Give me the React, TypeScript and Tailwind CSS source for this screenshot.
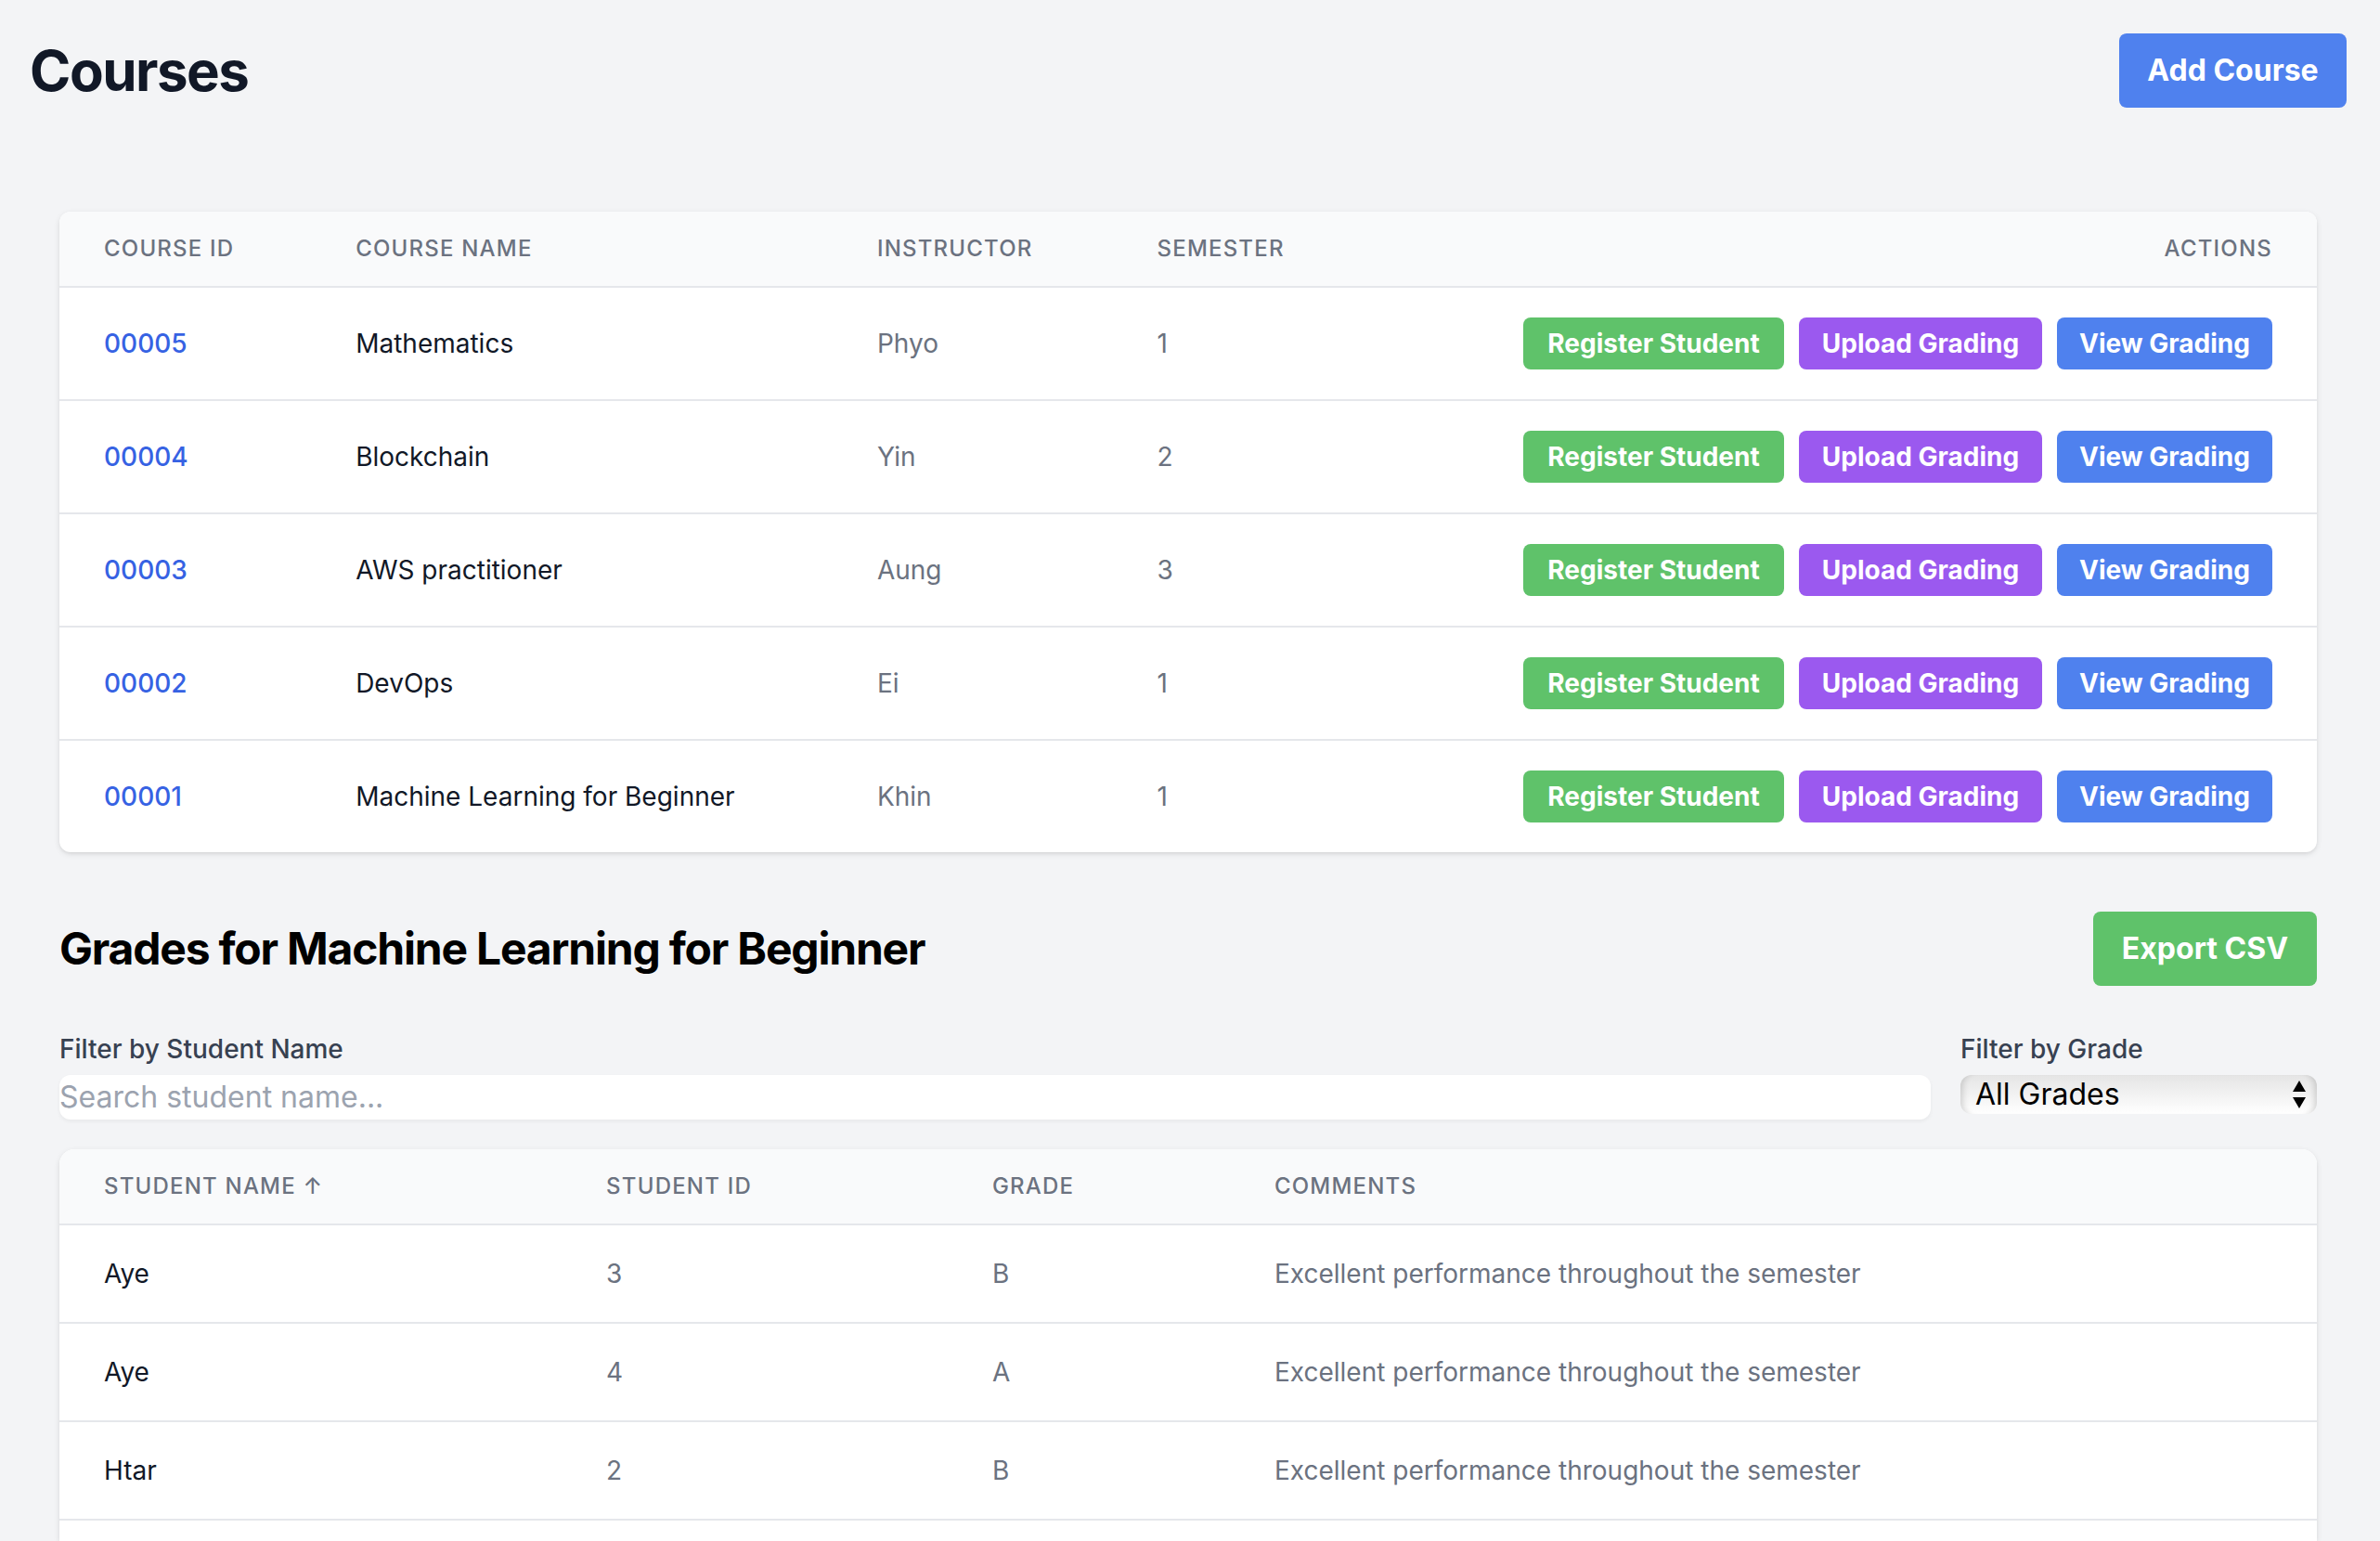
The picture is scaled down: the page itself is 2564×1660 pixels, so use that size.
import { useState } from "react";
import type { ReactNode } from "react";

const courses = [
  { id: "00005", name: "Mathematics", instructor: "Phyo", semester: 1 },
  { id: "00004", name: "Blockchain", instructor: "Yin", semester: 2 },
  { id: "00003", name: "AWS practitioner", instructor: "Aung", semester: 3 },
  { id: "00002", name: "DevOps", instructor: "Ei", semester: 1 },
  { id: "00001", name: "Machine Learning for Beginner", instructor: "Khin", semester: 1 },
];

const grades = [
  { name: "Aye", id: 3, grade: "B", comments: "Excellent performance throughout the semester" },
  { name: "Aye", id: 4, grade: "A", comments: "Excellent performance throughout the semester" },
  { name: "Htar", id: 2, grade: "B", comments: "Excellent performance throughout the semester" },
];

const cardShadow = "shadow-[0_2px_6px_rgba(0,0,0,0.1),0_2px_4px_-2px_rgba(0,0,0,0.1)]";

function Th({ children, className = "text-left" }: { children: ReactNode; className?: string }) {
  return (
    <th
      scope="col"
      className={`px-12 py-6 text-2xl leading-8 font-medium tracking-wider text-[#6b7280] uppercase ${className}`}
    >
      {children}
    </th>
  );
}

function Td({ children, className = "text-[#6b7280]" }: { children: ReactNode; className?: string }) {
  return <td className={`px-12 py-8 text-[28px] leading-10 whitespace-nowrap ${className}`}>{children}</td>;
}

function ActionButton({ children, className }: { children: ReactNode; className: string }) {
  return (
    <button type="button" className={`rounded-lg py-2 text-[28px] leading-10 font-bold text-white ${className}`}>
      {children}
    </button>
  );
}

export default function App() {
  const [query, setQuery] = useState("");
  const [grade, setGrade] = useState("");
  const visible = grades.filter(
    (g) => g.name.toLowerCase().includes(query.toLowerCase()) && (grade === "" || g.grade === grade),
  );

  return (
    <div className="flex min-h-screen flex-col bg-[#f3f4f6] font-['Inter',sans-serif] text-[32px] leading-[48px] text-black">
      <header className="flex items-center justify-between pt-9 pr-9 pl-8">
        <h1 className="text-[60px] leading-[72px] font-bold tracking-tight text-[#111827]">Courses</h1>
        <button type="button" className="w-[245px] rounded-lg bg-[#4f81ee] py-4 font-bold text-white">
          Add Course
        </button>
      </header>

      <main className="flex flex-1 flex-col pt-28 pr-[68px] pl-16">
        <section className={`overflow-hidden rounded-xl bg-white ${cardShadow}`}>
          <table className="w-full table-fixed">
            <colgroup>
              <col className="w-[11.15%]" />
              <col className="w-[23.1%]" />
              <col className="w-[12.4%]" />
              <col className="w-[13%]" />
              <col />
            </colgroup>
            <thead className="bg-[#f9fafb]">
              <tr>
                <Th>Course ID</Th>
                <Th>Course Name</Th>
                <Th>Instructor</Th>
                <Th>Semester</Th>
                <Th className="text-right">Actions</Th>
              </tr>
            </thead>
            <tbody>
              {courses.map((c) => (
                <tr key={c.id} className="border-t-2 border-[#e5e7eb]">
                  <Td className="font-medium">
                    <a href={`#${c.id}`} className="text-[#3662e3]">
                      {c.id}
                    </a>
                  </Td>
                  <Td className="text-[#111827]">{c.name}</Td>
                  <Td>{c.instructor}</Td>
                  <Td>{c.semester}</Td>
                  <Td>
                    <div className="flex justify-end gap-4">
                      <ActionButton className="w-[281px] bg-[#5fc26a]">Register Student</ActionButton>
                      <ActionButton className="w-[262px] bg-[#9b59ef]">Upload Grading</ActionButton>
                      <ActionButton className="w-[232px] bg-[#4f81ee]">View Grading</ActionButton>
                    </div>
                  </Td>
                </tr>
              ))}
            </tbody>
          </table>
        </section>

        <div className="flex items-center justify-between pt-16">
          <h2 className="text-5xl leading-[64px] font-bold tracking-tight">Grades for Machine Learning for Beginner</h2>
          <button type="button" className="w-[241px] rounded-lg bg-[#5fc26a] py-4 font-bold text-white">
            Export CSV
          </button>
        </div>

        <div className="flex items-start gap-8 pt-12 pb-8">
          <div className="flex flex-1 flex-col gap-2">
            <label htmlFor="student" className="text-[28px] leading-10 font-medium text-[#374151]">
              Filter by Student Name
            </label>
            <input
              id="student"
              type="text"
              value={query}
              onChange={(e) => setQuery(e.target.value)}
              placeholder="Search student name..."
              className="h-12 w-full rounded-xl bg-white shadow-[0_2px_4px_rgba(0,0,0,0.05)] placeholder:text-[#9ca3af]"
            />
          </div>
          <div className="flex w-96 flex-col gap-2">
            <label htmlFor="grade" className="text-[28px] leading-10 font-medium text-[#374151]">
              Filter by Grade
            </label>
            <div className="relative">
              <select
                id="grade"
                value={grade}
                onChange={(e) => setGrade(e.target.value)}
                className="block h-[42px] w-full appearance-none rounded-xl bg-linear-to-b from-[#e5e5e5] to-white px-4 leading-[42px] text-black shadow-[inset_8px_0_6px_-5px_rgba(0,0,0,0.14),inset_-8px_0_6px_-5px_rgba(0,0,0,0.14)]"
              >
                <option value="">All Grades</option>
                <option value="A">A</option>
                <option value="B">B</option>
              </select>
              <svg
                aria-hidden="true"
                viewBox="0 0 14 30"
                className="pointer-events-none absolute top-[6px] right-3 h-[30px] w-[14px]"
              >
                <path d="M7 0 14 12H0Z M0 18H14L7 30Z" fill="#000" />
              </svg>
            </div>
          </div>
        </div>

        <section className={`flex-1 overflow-hidden rounded-t-2xl bg-white ${cardShadow}`}>
          <table className="w-full table-fixed">
            <colgroup>
              <col className="w-[22.25%]" />
              <col className="w-[17.1%]" />
              <col className="w-[12.5%]" />
              <col />
            </colgroup>
            <thead className="bg-[#f9fafb]">
              <tr>
                <Th>Student Name ↑</Th>
                <Th>Student ID</Th>
                <Th>Grade</Th>
                <Th>Comments</Th>
              </tr>
            </thead>
            <tbody className="border-b-2 border-[#e5e7eb]">
              {visible.map((g) => (
                <tr key={g.id} className="border-t-2 border-[#e5e7eb]">
                  <Td className="text-[#111827]">{g.name}</Td>
                  <Td>{g.id}</Td>
                  <Td>{g.grade}</Td>
                  <Td>{g.comments}</Td>
                </tr>
              ))}
            </tbody>
          </table>
        </section>
      </main>
    </div>
  );
}
